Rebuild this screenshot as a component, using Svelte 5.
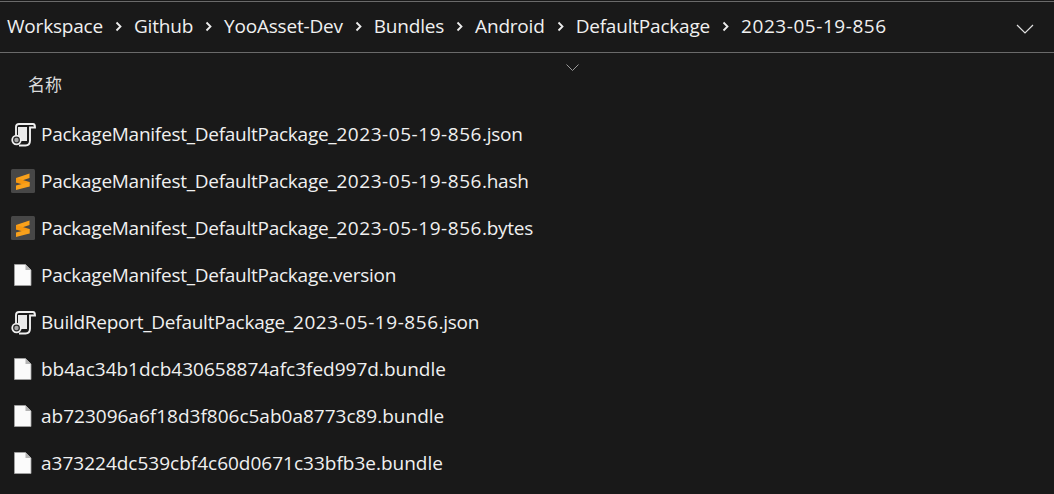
<script>
  const crumbs = ['Workspace','Github','YooAsset-Dev','Bundles','Android','DefaultPackage'];
  const date = '2023-05-19-856';
  const files = [
    { kind: 'script', name: 'PackageManifest_DefaultPackage_', date, ext: '.json' },
    { kind: 'sublime', name: 'PackageManifest_DefaultPackage_', date, ext: '.hash' },
    { kind: 'sublime', name: 'PackageManifest_DefaultPackage_', date, ext: '.bytes' },
    { kind: 'file', name: 'PackageManifest_DefaultPackage.version' },
    { kind: 'script', name: 'BuildReport_DefaultPackage_', date, ext: '.json' },
    { kind: 'file', hex: 'bb4ac34b1dcb430658874afc3fed997d.bundle' },
    { kind: 'file', hex: 'ab723096a6f18d3f806c5ab0a8773c89.bundle' },
    { kind: 'file', hex: 'a373224dc539cbf4c60d0671c33bfb3e.bundle' }
  ];
</script>

{#snippet sep()}
  <svg class="sep" width="7" height="11" viewBox="0 0 7 11"><path d="M1.500 1.500 5.500 5.500 1.500 9.500" fill="none" stroke="#ededed" stroke-width="1.800"/></svg>
{/snippet}

<div class="window">
  <nav class="bar">
    <div class="crumbs">
      {#each crumbs as c}
        <span>{c}</span>
        {@render sep()}
      {/each}
      <span class="date">{date}</span>
    </div>
    <svg class="expand" width="18" height="10" viewBox="0 0 18 10"><path d="M1 1 9 9 17 1" fill="none" stroke="#e0e0e0" stroke-width="1.200"/></svg>
  </nav>
  <header class="head">
    <span class="name">名称</span>
    <svg class="sort" width="13" height="7" viewBox="0 0 13 7"><path d="M.5.5 6.500 6.500 12.500.5" fill="none" stroke="#9a9a9a" stroke-width="1"/></svg>
  </header>
  <ul class="list">
    {#each files as f}
      <li>
        <span class="icon">
          {#if f.kind === 'script'}
            <svg width="26" height="26" viewBox="0 0 26 26">
              <path d="M8 6H17V20H8Z" fill="#e9e9e9"/>
              <path d="M6 14V6C6 4 7 3 9 3H23C24.500 3 25 4.500 25 6.500H20V19.500C20 22.500 18.500 24.500 15.500 24.500H9" fill="none" stroke="#efefef" stroke-width="1.900"/>
              <circle cx="6.500" cy="19" r="4.300" fill="#2a2a2a" stroke="#f0f0f0" stroke-width="1.700"/>
              <circle cx="6.500" cy="19" r="2.200" fill="#a8a8a8"/>
            </svg>
          {:else if f.kind === 'sublime'}
            <svg width="26" height="26" viewBox="0 0 26 26">
              <rect x="1" y="1" width="24" height="24" rx="1.500" fill="#474747"/>
              <path d="M19.500 5.500V10L6 14.500V10Z" fill="#f9a11b"/>
              <path d="M6 10 19.500 14V18.500L6 14.500Z" fill="#f5960f"/>
              <path d="M19.500 14V18.500L6 22V17.500Z" fill="#f9a11b"/>
            </svg>
          {:else}
            <svg width="26" height="26" viewBox="0 0 26 26">
              <path d="M4.500 2.500H15.500L21 8V23.500H4.500Z" fill="#fbfbfb" stroke="#a5a5a5" stroke-width=".8"/>
              <path d="M15.500 2.500V8H21Z" fill="#b4b4b4"/>
            </svg>
          {/if}
        </span>
        {#if f.hex}
          <span>{f.hex}</span>
        {:else}
          <span class="fname">{f.name}{#if f.date}<span class="date">{f.date}</span>{f.ext}{/if}</span>
        {/if}
      </li>
    {/each}
  </ul>
</div>

<style>
  :global(body) { margin: 0; background: #191919; }
  .window {
    width: 1054px; height: 494px; overflow: hidden; box-sizing: border-box;
    background: #191919; color: #f0f0f0;
    font-family: "Open Sans", "Noto Sans", "Noto Sans CJK SC", sans-serif;
    font-size: 19px;
    border-top: 1px solid #191919;
  }
  .bar {
    display: flex; align-items: center; justify-content: space-between;
    height: 52px; box-sizing: border-box;
    border-top: 1px solid #6a6a6a; border-bottom: 1px solid #6a6a6a;
    padding: 0 20px 0 7px;
  }
  .crumbs { display: flex; align-items: center; gap: 12px; letter-spacing: -.2px; margin-top: -3px; }
  .date { letter-spacing: .55px; }
  .sep { margin-top: 2px; }
  .expand { margin-top: 3px; }
  .head { position: relative; height: 57px; }
  .name { position: absolute; left: 28px; top: 19px; font-size: 17px; line-height: 24px; color: #dcdcdc; font-family: "Noto Sans CJK SC", sans-serif; }
  .sort { position: absolute; left: 566px; top: 11px; }
  .list { list-style: none; margin: 0; padding: 0; }
  li { display: flex; align-items: center; height: 47px; padding-left: 10px; white-space: nowrap; }
  .icon { display: flex; width: 26px; height: 26px; margin-right: 5px; }
  .fname { letter-spacing: -.26px; }
</style>
